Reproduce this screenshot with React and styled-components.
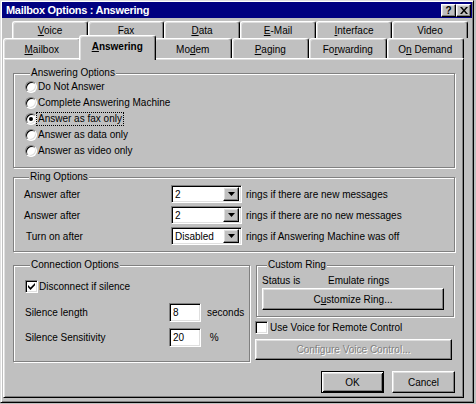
import React from 'react';
import styled, { createGlobalStyle, css } from 'styled-components';

const GlobalStyle = createGlobalStyle`
  html, body {
    margin: 0;
    padding: 0;
    background: #c0c0c0;
  }
  body {
    font-family: "Liberation Sans", Arial, sans-serif;
    font-size: 10px;
    color: #000;
  }
`

const raised = css`
  background: #c0c0c0;
  border: 1px solid;
  border-color: #fff #000 #000 #fff;
  box-shadow: inset -1px -1px #808080, inset 1px 1px #dfdfdf;
`

const sunken = css`
  background: #fff;
  border: 1px solid;
  border-color: #808080 #fff #fff #808080;
  box-shadow: inset 1px 1px #000, inset -1px -1px #dfdfdf;
`

const Window = styled.div`
  width: 474px;
  height: 403px;
  box-sizing: border-box;
  padding: 1px;
  background: #c0c0c0;
  border: 1px solid;
  border-color: #dfdfdf #000 #000 #dfdfdf;
  box-shadow: inset 1px 1px #fff, inset -1px -1px #808080;
  display: flex;
  flex-direction: column;
`

const Caption = styled.div`
  height: 16px;
  flex: none;
  background: #000080;
  color: #fff;
  display: flex;
  align-items: center;
  justify-content: space-between;
  padding: 0 1px 0 4px;
  font: bold 11px "Liberation Sans", Arial, sans-serif;
  letter-spacing: -0.3px;
`

const CaptionButtons = styled.div`
  display: flex;
`

const CaptionButton = styled.span`
  ${raised};
  width: 15px;
  height: 13px;
  box-sizing: border-box;
  display: flex;
  align-items: center;
  justify-content: center;
  color: #000;
  font-size: 10px;
  letter-spacing: 0;
`

const Tabs = styled.div`
  margin: 3px 8px 0 1px;
  flex: none;
`

const TabRow = styled.div`
  display: flex;
  align-items: flex-end;
  height: ${p => p.$h}px;
  margin: ${p => (p.$back ? '0 -4px 0 9px' : '0')};
`

const Tab = styled.div`
  flex: 1;
  height: 100%;
  box-sizing: border-box;
  display: flex;
  align-items: center;
  justify-content: center;
  white-space: pre;
  background: #c0c0c0;
  border-left: 1px solid #fff;
  border-top: 1px solid #fff;
  border-right: 1px solid #000;
  border-radius: 3px 3px 0 0;
  box-shadow: inset -1px 0 #808080, inset 1px 1px #dfdfdf;
  padding-top: 1px;
  ${p => p.$active && css`
    position: relative;
    z-index: 2;
    height: 25px;
    margin: 0 -2px -2px;
    padding-bottom: 4px;
    font-weight: bold;
  `}
`

const Mn = styled.span`
  text-decoration: underline;
`

const Panel = styled.div`
  margin: 0 8px 0 1px;
  height: 340px;
  box-sizing: border-box;
  flex: none;
  border: 1px solid;
  border-color: #fff #000 #000 #fff;
  box-shadow: inset 1px 1px #dfdfdf, inset -1px -1px #808080;
  padding: 8px 8px 0 9px;
  display: flex;
  flex-direction: column;
`

const Group = styled.fieldset`
  margin: ${p => p.$mt || 0}px 0 0 ${p => p.$ml || 0}px;
  padding: 0 0 ${p => p.$pb || 0}px ${p => p.$pl || 0}px;
  border: 1px solid #808080;
  box-shadow: inset 1px 1px #fff, 1px 1px #fff;
  min-width: 0;
  width: ${p => (p.$w ? `${p.$w}px` : 'auto')};
  box-sizing: border-box;
`

const Legend = styled.legend`
  margin-left: 5px;
  padding: 0 1px;
  line-height: 12px;
  background: #c0c0c0;
`

const OptionList = styled.div`
  display: flex;
  flex-direction: column;
`

const OptionRow = styled.div`
  display: flex;
  align-items: center;
  height: 16px;
`

const Radio = styled.span`
  width: 12px;
  height: 12px;
  flex: none;
  box-sizing: border-box;
  border-radius: 50%;
  ${sunken};
  display: flex;
  align-items: center;
  justify-content: center;
  &::after {
    content: '';
    width: 4px;
    height: 4px;
    border-radius: 50%;
    background: ${p => (p.$on ? '#000' : 'transparent')};
  }
`

const OptionText = styled.span`
  padding: 0 1px;
  line-height: 12px;
  outline: ${p => (p.$focus ? '1px dotted #000' : 'none')};
`

const RingGrid = styled.div`
  display: grid;
  grid-template-columns: 143px 71px auto;
  column-gap: 4px;
  row-gap: 3px;
  align-items: center;
  margin-top: 2px;
`

const RowLabel = styled.span`
  padding-left: ${p => p.$indent || 0}px;
`

const Combo = styled.div`
  ${sunken};
  height: 18px;
  box-sizing: border-box;
  display: flex;
  align-items: center;
  justify-content: space-between;
  padding: 2px 2px 2px 3px;
`

const ComboButton = styled.span`
  ${raised};
  width: 16px;
  height: 14px;
  box-sizing: border-box;
  display: flex;
  align-items: center;
  justify-content: center;
`

const Bottom = styled.div`
  display: flex;
  gap: 5px;
  margin-top: 7px;
  align-items: flex-start;
`

const CheckRow = styled.div`
  display: flex;
  align-items: center;
  gap: ${p => p.$gap || 1}px;
  height: 13px;
  margin-top: ${p => p.$mt || 0}px;
`

const Check = styled.span`
  ${sunken};
  width: 13px;
  height: 13px;
  box-sizing: border-box;
  flex: none;
  display: flex;
  align-items: center;
  justify-content: center;
`

const FieldGrid = styled.div`
  display: grid;
  grid-template-columns: 138px 32px auto;
  column-gap: 6px;
  row-gap: 6px;
  align-items: center;
  margin-top: 10px;
`

const Field = styled.div`
  ${sunken};
  height: 19px;
  box-sizing: border-box;
  display: flex;
  align-items: center;
  padding-left: 3px;
`

const RightColumn = styled.div`
  width: 199px;
  display: flex;
  flex-direction: column;
`

const StatusRow = styled.div`
  display: grid;
  grid-template-columns: 66px auto;
  margin-top: 3px;
  line-height: 13px;
`

const Button = styled.div`
  ${raised};
  width: ${p => p.$w}px;
  height: ${p => p.$h || 21}px;
  box-sizing: border-box;
  display: flex;
  align-items: center;
  justify-content: center;
  margin-top: ${p => p.$mt || 0}px;
  ${p => p.$disabled && css`
    color: #808080;
    text-shadow: 1px 1px #fff;
  `}
  ${p => p.$default && css`
    border: 1px solid #000;
    box-shadow: inset 1px 1px #fff, inset -1px -1px #000, inset 2px 2px #dfdfdf, inset -2px -2px #808080;
  `}
`

const Actions = styled.div`
  display: flex;
  justify-content: flex-end;
  gap: 8px;
  margin-top: 9px;
`

const Arrow = () => (
  <svg width="7" height="4" viewBox="0 0 7 4">
    <path d="M0 0h7L3.5 4z" fill="#000" />
  </svg>
)

const CloseGlyph = () => (
  <svg width="8" height="7" viewBox="0 0 8 7">
    <path d="M0 0h2l2 2.5L6 0h2L5 3.5 8 7H6L4 4.5 2 7H0l3-3.5z" fill="#000" />
  </svg>
)

const Tick = () => (
  <svg width="7" height="7" viewBox="0 0 7 7">
    <path d="M0 2l2.5 2.5L7 0v2.2L2.5 7 0 4.3z" fill="#000" />
  </svg>
)

const backTabs = [
  ['V', 'oice'], ['F', 'ax'], ['D', 'ata'], ['E', '-Mail'], ['I', 'nterface'], ['', 'Video'],
]

const answerOptions = [
  'Do Not Answer',
  'Complete Answering Machine',
  'Answer as fax only',
  'Answer as data only',
  'Answer as video only',
]

const ringRows = [
  { label: 'Answer after', value: '2', text: 'rings if there are new messages' },
  { label: 'Answer after', value: '2', text: 'rings if there are no new messages' },
  { label: 'Turn on after', value: 'Disabled', text: 'rings if Answering Machine was off', indent: 2 },
]

const App = () => {
	return (
		<Window>
			<GlobalStyle />
			<Caption>
				<span>Mailbox Options : Answering</span>
				<CaptionButtons>
					<CaptionButton><b>?</b></CaptionButton>
					<CaptionButton><CloseGlyph /></CaptionButton>
				</CaptionButtons>
			</Caption>

			<Tabs>
				<TabRow $h={17} $back>
					{backTabs.map(([m, rest]) => (
						<Tab key={m + rest}><span><Mn>{m}</Mn>{rest}</span></Tab>
					))}
				</TabRow>
				<TabRow $h={20}>
					<Tab><span><Mn>M</Mn>ailbox</span></Tab>
					<Tab $active><span><Mn>A</Mn>nswering</span></Tab>
					<Tab><span>Mo<Mn>d</Mn>em</span></Tab>
					<Tab><span><Mn>P</Mn>aging</span></Tab>
					<Tab><span>Fo<Mn>r</Mn>warding</span></Tab>
					<Tab><span>O<Mn>n</Mn> Demand</span></Tab>
				</TabRow>
			</Tabs>

			<Panel>
				<Group $pl={11} $pb={8}>
					<Legend>Answering Options</Legend>
					<OptionList>
						{answerOptions.map((label, i) => (
							<OptionRow key={label}>
								<Radio $on={i === 2} />
								<OptionText $focus={i === 2}>{label}</OptionText>
							</OptionRow>
						))}
					</OptionList>
				</Group>

				<Group $mt={3} $pl={10} $pb={6}>
					<Legend>Ring Options</Legend>
					<RingGrid>
						{ringRows.map((row, i) => (
							<React.Fragment key={i}>
								<RowLabel $indent={row.indent}>{row.label}</RowLabel>
								<Combo>
									<span>{row.value}</span>
									<ComboButton><Arrow /></ComboButton>
								</Combo>
								<span>{row.text}</span>
							</React.Fragment>
						))}
					</RingGrid>
				</Group>

				<Bottom>
					<Group $w={237} $pl={11} $pb={14}>
						<Legend>Connection Options</Legend>
						<CheckRow $mt={9}>
							<Check><Tick /></Check>
							<span>Disconnect if silence</span>
						</CheckRow>
						<FieldGrid>
							<span>Silence length</span>
							<Field>8</Field>
							<span>seconds</span>
							<span>Silence Sensitivity</span>
							<Field>20</Field>
							<span>&nbsp;%</span>
						</FieldGrid>
					</Group>

					<RightColumn>
						<Group $ml={1} $pl={5} $pb={6}>
							<Legend>Custom Ring</Legend>
							<StatusRow>
								<span>Status is</span>
								<span>Emulate rings</span>
							</StatusRow>
							<Button $w={182} $h={22} $mt={1}>
								<span>C<Mn>u</Mn>stomize Ring...</span>
							</Button>
						</Group>
						<CheckRow $mt={4} $gap={2}>
							<Check />
							<span>Use Voice for Remote Control</span>
						</CheckRow>
						<Button $w={197} $mt={5} $disabled>Configure Voice Control...</Button>
					</RightColumn>
				</Bottom>

				<Actions>
					<Button $w={63} $h={22} $default>OK</Button>
					<Button $w={63} $h={22}>Cancel</Button>
				</Actions>
			</Panel>
		</Window>
	)
}

export default App
